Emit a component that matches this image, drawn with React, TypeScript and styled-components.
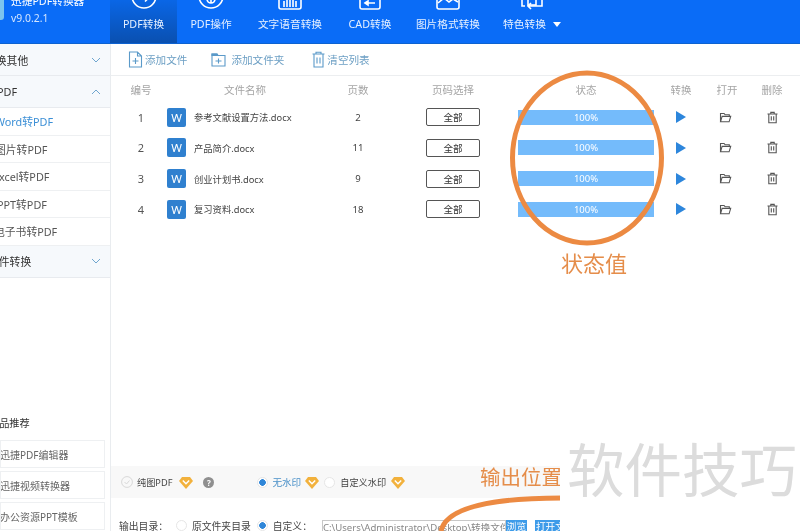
import React from "react";
import styled, { createGlobalStyle } from "styled-components";

const Global = createGlobalStyle`
  html, body { margin: 0; padding: 0; background: #fff; }
  body { font-family: "Noto Sans", "Noto Sans CJK SC", sans-serif; }
  * { box-sizing: border-box; }
`;

const Page = styled.div`
  position: relative;
  width: 800px;
  height: 531px;
  overflow: hidden;
  background: #fff;
  filter: blur(0.35px);
`;

const Header = styled.header`
  display: flex;
  height: 44px;
  background: #0a6cf7;
  border-bottom: 1px solid #0d62d0;
`;

const Brand = styled.div`
  width: 110px;
  display: flex;
  position: relative;
  flex-direction: column;
  padding-left: 11px;
  color: #fff;
`;

const LogoChip = styled.div`
  position: absolute;
  left: -14px;
  top: -6px;
  width: 18px;
  height: 26px;
  border-radius: 3px;
  background: #7cc4ee;
`;

const BrandName = styled.div`
  font-size: 10.7px;
  line-height: 14px;
  margin-top: -9px;
  white-space: nowrap;
`;

const Version = styled.div`
  font-size: 10.4px;
  line-height: 14px;
  margin-top: 3px;
  color: #d4e6ff;
`;

const BrandInner = styled.div`
  margin-top: 3px;
`;

const Tab = styled.div<{ $w: number; $active?: boolean }>`
  width: ${(p) => p.$w}px;
  height: 43px;
  overflow: hidden;
  display: flex;
  flex-direction: column;
  align-items: center;
  color: #e6f0ff;
  background: ${(p) => (p.$active ? "linear-gradient(#0a66e6, #0a50b0)" : "transparent")};
`;

const TabIcon = styled.svg`
  width: 30px;
  height: 28px;
  margin-top: -18px;
  flex: none;
  fill: none;
  stroke: #fff;
  stroke-width: 1.6;
`;

const TabLabel = styled.div`
  margin-top: 7px;
  font-size: 10.7px;
  line-height: 14px;
  white-space: nowrap;
  display: flex;
  align-items: center;
`;

const Caret = styled.span`
  width: 0;
  height: 0;
  margin-left: 7px;
  border-left: 4px solid transparent;
  border-right: 4px solid transparent;
  border-top: 5px solid #fff;
`;

const Body = styled.div`
  display: flex;
  height: 487px;
`;

const Sidebar = styled.aside`
  width: 111px;
  flex: none;
  border-right: 1px solid #e9ecef;
  display: flex;
  flex-direction: column;
  overflow: hidden;
`;

const Section = styled.div`
  height: 32px;
  flex: none;
  display: flex;
  align-items: center;
  justify-content: space-between;
  padding-right: 9px;
  background: #f6f9fc;
  border-bottom: 1px solid #e8ebef;
  font-size: 10.8px;
  color: #333;
`;

const Clip = styled.span<{ $shift: number }>`
  margin-left: ${(p) => p.$shift}px;
  white-space: nowrap;
`;

const SubItem = styled.div<{ $active?: boolean }>`
  height: 27.5px;
  flex: none;
  display: flex;
  align-items: center;
  background: #fff;
  border-bottom: 1px solid #eef0f2;
  font-size: 10.8px;
  color: ${(p) => (p.$active ? "#3b8fd6" : "#555")};
`;

const Recommend = styled.div`
  margin-top: auto;
  font-size: 10.2px;
  color: #333;
  display: flex;
  flex-direction: column;
  gap: 3px;
  padding-bottom: 1px;
`;

const RecommendTitle = styled.div`
  line-height: 14px;
  margin-bottom: 7px;
`;

const Card = styled.div`
  width: 105px;
  height: 28px;
  display: flex;
  align-items: center;
  border: 1px solid #eef0f2;
  font-size: 10px;
  color: #666;
  overflow: hidden;
`;

const Main = styled.main`
  flex: 1;
  min-width: 0;
  display: flex;
  flex-direction: column;
`;

const Toolbar = styled.div`
  height: 32px;
  flex: none;
  display: flex;
  align-items: center;
  padding-left: 17px;
  border-bottom: 1px solid #eceef0;
`;

const ToolItem = styled.div<{ $mr: number; $gap: number }>`
  display: flex;
  align-items: center;
  gap: ${(p) => p.$gap}px;
  margin-right: ${(p) => p.$mr}px;
  font-size: 10.6px;
  color: #6c9fc4;
  white-space: nowrap;
`;

const ToolIcon = styled.svg`
  width: 15px;
  height: 17px;
  fill: none;
  stroke: #5b9ac9;
  stroke-width: 1.1;
`;

const COLS = "42px 166px 60px 130px 136px 54px 38px 52px";

const TableHead = styled.div`
  display: grid;
  grid-template-columns: ${COLS};
  height: 26px;
  margin-left: 9px;
  align-items: center;
  justify-items: center;
  font-size: 10.5px;
  color: #a5a5a5;
`;

const Row = styled.div`
  display: grid;
  grid-template-columns: ${COLS};
  height: 30.67px;
  margin-left: 9px;
  align-items: center;
  justify-items: center;
  color: #444;
`;

const Num = styled.div`
  font-size: 11px;
  color: #555;
`;

const FileCell = styled.div`
  justify-self: start;
  display: flex;
  align-items: center;
  gap: 8px;
  margin-left: 5px;
  font-size: 9.3px;
  color: #444;
  white-space: nowrap;
`;

const WordBadge = styled.div`
  width: 19px;
  height: 19px;
  flex: none;
  border-radius: 2px;
  background: #2f80cf;
  color: #fff;
  display: flex;
  align-items: center;
  justify-content: center;
  font-size: 11.5px;
`;

const Pages = styled.div`
  font-size: 9.6px;
  color: #444;
`;

const PickButton = styled.div`
  width: 54px;
  height: 18px;
  border: 1px solid #555;
  border-radius: 2px;
  display: flex;
  align-items: center;
  justify-content: center;
  font-size: 9.6px;
  color: #333;
`;

const Progress = styled.div`
  width: 136px;
  height: 15px;
  background: #74bbfb;
  color: #fff;
  display: flex;
  align-items: center;
  justify-content: center;
  font-size: 9.5px;
`;

const ActionIcon = styled.svg<{ $mr?: number }>`
  width: 13px;
  height: 13px;
  margin-right: ${(p) => p.$mr ?? 0}px;
  fill: none;
  stroke: #555;
  stroke-width: 1.1;
`;

const Play = styled.span`
  width: 0;
  height: 0;
  margin-left: -1px;
  border-top: 6px solid transparent;
  border-bottom: 6px solid transparent;
  border-left: 10px solid #2d86dc;
`;

const Options = styled.div`
  margin-top: auto;
  height: 32px;
  flex: none;
  display: flex;
  align-items: center;
  padding-left: 10px;
  background: #f8f8f8;
  font-size: 9.2px;
  color: #444;
  white-space: nowrap;
`;

const Radio = styled.span<{ $on?: boolean; $ml?: number; $mr?: number }>`
  width: 11px;
  height: 11px;
  flex: none;
  border-radius: 50%;
  border: 1px solid #e6e6e6;
  background: ${(p) => (p.$on ? "radial-gradient(circle, #2f86d8 0 3px, #fff 3.6px)" : "#fff")};
  margin-left: ${(p) => p.$ml ?? 0}px;
  margin-right: ${(p) => p.$mr ?? 0}px;
`;

const CheckCircle = styled.svg`
  width: 12px;
  height: 12px;
  flex: none;
  margin-right: 4px;
  fill: none;
  stroke: #d8d8d8;
`;

const OptionText = styled.span<{ $blue?: boolean; $mr?: number }>`
  color: ${(p) => (p.$blue ? "#4a90c8" : "#444")};
  font-size: ${(p) => (p.$blue ? "9.6px" : "inherit")};
  margin-right: ${(p) => p.$mr ?? 0}px;
`;

const Gem = styled.svg<{ $mr?: number }>`
  width: 14px;
  height: 13px;
  flex: none;
  margin-right: ${(p) => p.$mr ?? 0}px;
`;

const Help = styled.span`
  width: 11px;
  height: 11px;
  flex: none;
  border-radius: 50%;
  background: #8f8f8f;
  color: #fff;
  font-size: 8px;
  font-weight: 700;
  display: flex;
  align-items: center;
  justify-content: center;
`;

const Output = styled.div`
  height: 33px;
  flex: none;
  display: flex;
  align-items: flex-start;
  padding: 22px 0 0 8px;
  font-size: 9.8px;
  line-height: 14px;
  color: #444;
  white-space: nowrap;
  overflow: hidden;
`;

const PathBox = styled.div`
  width: 184px;
  height: 18px;
  flex: none;
  margin-left: 10px;
  border: 1px solid #c8c8c8;
  font-size: 9.6px;
  color: #888;
  overflow: hidden;
`;

const BlueBtn = styled.div<{ $mr?: number; $w: number }>`
  width: ${(p) => p.$w}px;
  height: 18px;
  flex: none;
  margin-right: ${(p) => p.$mr ?? 0}px;
  background: #3d9be9;
  color: #fff;
  font-size: 9.6px;
  text-align: center;
  overflow: hidden;
`;

const Annotations = styled.svg`
  position: absolute;
  left: 0;
  top: 0;
  width: 800px;
  height: 531px;
  fill: none;
  pointer-events: none;
`;

const StatusNote = styled.div`
  position: absolute;
  left: 561px;
  top: 249px;
  font-size: 22px;
  line-height: 28px;
  color: #e58d4a;
`;

const OutputNote = styled.div`
  position: absolute;
  left: 480px;
  top: 463px;
  font-size: 20.5px;
  line-height: 28px;
  color: #e58d4a;
  white-space: nowrap;
`;

const WatermarkBlock = styled.div`
  position: absolute;
  left: 560px;
  top: 442px;
  width: 240px;
  height: 89px;
  background: #fff;
  padding: 0 0 0 7px;
  font-size: 57.5px;
  line-height: 56px;
  color: #dcdcdc;
  white-space: nowrap;
`;

const GemIcon = ({ mr }: { mr?: number }) => (
  <Gem $mr={mr} viewBox="0 0 14 13">
    <path d="M3 1h8l3 4-7 8-7-8z" fill="#f2b13c" />
    <path d="M3.8 4.6 7 7.8l3.2-3.2" fill="none" stroke="#fff" strokeWidth="1.4" />
  </Gem>
);

const FolderIcon = () => (
  <ActionIcon $mr={3} viewBox="0 0 13 13">
    <path d="M1.5 10.8V2.5h3.6l1 1.3h4.2v1.6" />
    <path d="M1.5 10.8l1.6-5.4h8.6l-1.6 5.4z" />
  </ActionIcon>
);

const TrashIcon = () => (
  <ActionIcon viewBox="0 0 13 13">
    <path d="M1.5 3h10M4.8 3V1.4h3.4V3M2.8 3v8.8h7.4V3M5.3 5.2v4.4M7.7 5.2v4.4" />
  </ActionIcon>
);

const rows = [
  { id: 1, name: "参考文献设置方法.docx", pages: 2 },
  { id: 2, name: "产品简介.docx", pages: 11 },
  { id: 3, name: "创业计划书.docx", pages: 9 },
  { id: 4, name: "复习资料.docx", pages: 18 },
];

const Chevron = ({ up }: { up?: boolean }) => (
  <svg width="10" height="6" viewBox="0 0 10 6" fill="none" stroke="#6fa6cf" strokeWidth="1">
    <path d={up ? "M1 5l4-4 4 4" : "M1 1l4 4 4-4"} />
  </svg>
);

export default function App() {
  return (
    <>
      <Global />
      <Page>
        <Header>
          <Brand>
            <LogoChip />
            <BrandInner>
              <BrandName>迅捷PDF转换器</BrandName>
              <Version>v9.0.2.1</Version>
            </BrandInner>
          </Brand>
          <Tab $w={67} $active>
            <TabIcon viewBox="0 0 30 28">
              <circle cx="15" cy="14" r="12" />
              <path d="M9 15h11M16 10.5l4.5 4.5-4.5 4.5" />
            </TabIcon>
            <TabLabel>PDF转换</TabLabel>
          </Tab>
          <Tab $w={68}>
            <TabIcon viewBox="0 0 30 28">
              <circle cx="15" cy="14" r="12" />
              <circle cx="15" cy="17" r="4" />
              <path d="M15 13v8" />
            </TabIcon>
            <TabLabel>PDF操作</TabLabel>
          </Tab>
          <Tab $w={90}>
            <TabIcon viewBox="0 0 30 28">
              <rect x="4" y="2" width="22" height="25" rx="2" />
              <path d="M9 25v-6M12 25v-9M15 25v-11M18 25v-9M21 25v-6" />
            </TabIcon>
            <TabLabel>文字语音转换</TabLabel>
          </Tab>
          <Tab $w={70}>
            <TabIcon viewBox="0 0 30 28">
              <rect x="5" y="2" width="20" height="25" rx="2" />
              <path d="M10 21h10M10 21l3-2v4z" />
            </TabIcon>
            <TabLabel>CAD转换</TabLabel>
          </Tab>
          <Tab $w={86}>
            <TabIcon viewBox="0 0 30 28">
              <rect x="4" y="2" width="22" height="25" rx="2" />
              <path d="M5 21l6-5 5 4 4-3 5 3" />
            </TabIcon>
            <TabLabel>图片格式转换</TabLabel>
          </Tab>
          <Tab $w={82}>
            <TabIcon viewBox="0 0 30 28">
              <rect x="11" y="14" width="8" height="9" />
              <path d="M5 10v14h3M25 10v14H11M14 27l-3-3 3-3" />
            </TabIcon>
            <TabLabel>
              特色转换
              <Caret />
            </TabLabel>
          </Tab>
        </Header>
        <Body>
          <Sidebar>
            <Section>
              <Clip $shift={-15}>转换其他</Clip>
              <Chevron />
            </Section>
            <Section>
              <Clip $shift={-3}>PDF</Clip>
              <Chevron up />
            </Section>
            <SubItem $active>
              <Clip $shift={-5}>Word转PDF</Clip>
            </SubItem>
            <SubItem>
              <Clip $shift={-5}>图片转PDF</Clip>
            </SubItem>
            <SubItem>
              <Clip $shift={-7}>Excel转PDF</Clip>
            </SubItem>
            <SubItem>
              <Clip $shift={-3}>PPT转PDF</Clip>
            </SubItem>
            <SubItem>
              <Clip $shift={-6}>电子书转PDF</Clip>
            </SubItem>
            <Section>
              <Clip $shift={-12}>文件转换</Clip>
              <Chevron />
            </Section>
            <Recommend>
              <RecommendTitle>
                <Clip $shift={-11}>产品推荐</Clip>
              </RecommendTitle>
              <Card>
                <Clip $shift={-1}>迅捷PDF编辑器</Clip>
              </Card>
              <Card>
                <Clip $shift={-1}>迅捷视频转换器</Clip>
              </Card>
              <Card>
                <Clip $shift={-1}>办公资源PPT模板</Clip>
              </Card>
            </Recommend>
          </Sidebar>
          <Main>
            <Toolbar>
              <ToolItem $mr={24} $gap={2}>
                <ToolIcon viewBox="0 0 15 17">
                  <path d="M1.5 1h8l4 4v11h-12zM9.5 1v4h4M4.5 10h6M7.5 7v6" />
                </ToolIcon>
                添加文件
              </ToolItem>
              <ToolItem $mr={27} $gap={5}>
                <ToolIcon viewBox="0 0 15 17">
                  <path d="M1 3h5l1 1.5h7V15H1zM4.5 10h6M7.5 7.5v5" />
                  <path d="M1 3h5l1 1.5H1z" fill="#5b9ac9" />
                </ToolIcon>
                添加文件夹
              </ToolItem>
              <ToolItem $mr={0} $gap={1}>
                <ToolIcon viewBox="0 0 15 17">
                  <path d="M1.5 3h12M5 3V1.2h5V3M3 3v13h9V3M6 6.5v6M9 6.5v6" />
                </ToolIcon>
                清空列表
              </ToolItem>
            </Toolbar>
            <TableHead>
              <div>编号</div>
              <div>文件名称</div>
              <div>页数</div>
              <div>页码选择</div>
              <div>状态</div>
              <div>转换</div>
              <div>打开</div>
              <div>删除</div>
            </TableHead>
            {rows.map((r) => (
              <Row key={r.id}>
                <Num>{r.id}</Num>
                <FileCell>
                  <WordBadge>W</WordBadge>
                  {r.name}
                </FileCell>
                <Pages>{r.pages}</Pages>
                <PickButton>全部</PickButton>
                <Progress>100%</Progress>
                <Play />
                <FolderIcon />
                <TrashIcon />
              </Row>
            ))}
            <Options>
              <CheckCircle viewBox="0 0 12 12">
                <circle cx="6" cy="6" r="5.4" />
                <path d="M3.5 6l2 2 3-3.5" />
              </CheckCircle>
              <OptionText $mr={7}>纯图PDF</OptionText>
              <GemIcon mr={10} />
              <Help>?</Help>
              <Radio $on $ml={43} $mr={4} />
              <OptionText $blue $mr={4}>无水印</OptionText>
              <GemIcon mr={5} />
              <Radio $mr={5} />
              <OptionText $mr={5}>自定义水印</OptionText>
              <GemIcon />
            </Options>
            <Output>
              <span>输出目录：</span>
              <Radio $ml={8} $mr={5} />
              <span>原文件夹目录</span>
              <Radio $on $ml={6} $mr={5} />
              <span>自定义：</span>
              <PathBox>C:\Users\Administrator\Desktop\转换文件</PathBox>
              <BlueBtn $w={21} $mr={8}>浏览</BlueBtn>
              <BlueBtn $w={50}>打开文件夹</BlueBtn>
            </Output>
          </Main>
        </Body>
        <Annotations viewBox="0 0 800 531">
          <ellipse cx="587" cy="158" rx="74.5" ry="85" stroke="#ec8a42" strokeWidth="5" />
          <path d="M441 531C446 508 490 498 562 498" stroke="#ec8a42" strokeWidth="5" />
        </Annotations>
        <StatusNote>状态值</StatusNote>
        <OutputNote>输出位置</OutputNote>
        <WatermarkBlock>软件技巧</WatermarkBlock>
      </Page>
    </>
  );
}
